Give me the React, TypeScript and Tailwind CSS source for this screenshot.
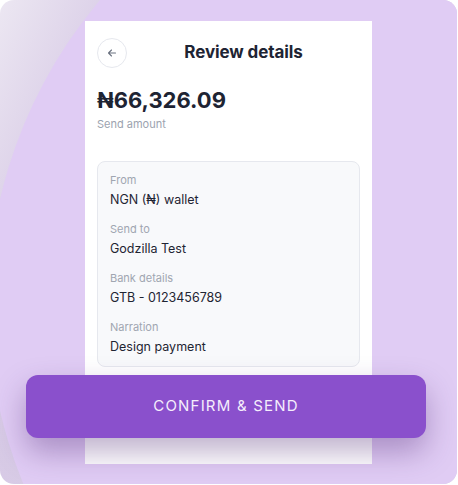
import React from 'react';

const rows = [
  { label: 'From', value: 'NGN (₦) wallet' },
  { label: 'Send to', value: 'Godzilla Test' },
  { label: 'Bank details', value: 'GTB - 0123456789' },
  { label: 'Narration', value: 'Design payment' },
];

const App: React.FC = () => {
  return (
    <div className="w-[458px] h-[485px] bg-white font-['Inter',sans-serif]">
      {/* Card */}
      <div className="relative w-[457px] h-[484px] overflow-hidden rounded-[14px] bg-[linear-gradient(115deg,#ece7f2_0%,#d8cbe6_20%,#d6c9e5_100%)]">
        {/* big lavender sweep */}
        <div className="absolute left-[-12px] top-[-166px] w-[942px] h-[942px] rounded-full bg-[#e0ccf4]" />

        {/* Phone panel */}
        <div className="relative ml-[85px] mt-[21px] w-[287px] h-[443px] bg-white px-3 pt-[17px]">
          <div className="flex items-center">
            <button className="flex h-[30px] w-[30px] items-center justify-center rounded-full border border-[#e6e8ee] text-[#6b7280]">
              <svg width="10" height="10" viewBox="0 0 10 10" fill="none" stroke="currentColor" strokeWidth="1.1" strokeLinecap="round" strokeLinejoin="round">
                <path d="M8.5 5H1.5M4.5 2L1.5 5L4.5 8" />
              </svg>
            </button>
            <h1 className="flex-1 text-center text-[17px] font-bold tracking-[-0.1px] text-[#1e2433]">Review details</h1>
          </div>

          <div className="mt-[18px] text-[22px] leading-[28px] font-bold text-[#1e2433]">₦66,326.09</div>
          <div className="mt-[3px] text-[11px] leading-[14px] text-[#9ca3af]">Send amount</div>

          <div className="mt-[30px] rounded-[8px] border border-[#e6e8ee] bg-[#f8f9fb] px-3 pt-[11px] pb-[10px]">
            <div className="flex flex-col gap-[13px]">
              {rows.map((r) => (
                <div key={r.label} className="flex flex-col gap-[4px]">
                  <span className="text-[11px] leading-[14px] text-[#a0a6b1]">{r.label}</span>
                  <span className="text-[12.5px] leading-[18px] text-[#1f2533]">{r.value}</span>
                </div>
              ))}
            </div>
          </div>
        </div>

        {/* Confirm button */}
        <button className="absolute left-[26px] top-[375px] flex h-[63px] w-[400px] items-center justify-center rounded-[12px] bg-[#8a50cc] text-[15px] tracking-[1.2px] text-[#f5eefc] shadow-[0_14px_30px_rgba(70,30,110,0.35)]">
          CONFIRM &amp; SEND
        </button>
      </div>
    </div>
  );
};

export default App;
